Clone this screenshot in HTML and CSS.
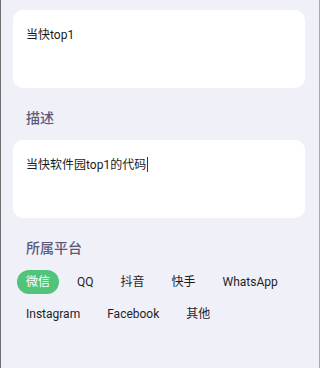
FILE: index.html
```html
<!DOCTYPE html>
<html>
<head>
  <meta charset="UTF-8">
  <title>编辑</title>
  <link rel="stylesheet" href="styles.css">
</head>
<body>
  <div class="page">
    <div class="card">
      <div class="card-text">当快top1</div>
    </div>

    <div class="label">描述</div>
    <div class="card">
      <div class="card-text">当快软件园top1的代码<span class="caret"></span></div>
    </div>

    <div class="label">所属平台</div>
    <div class="chips">
      <span class="chip active">微信</span>
      <span class="chip">QQ</span>
      <span class="chip">抖音</span>
      <span class="chip">快手</span>
      <span class="chip">WhatsApp</span>
      <span class="chip">Instagram</span>
      <span class="chip">Facebook</span>
      <span class="chip">其他</span>
    </div>
  </div>
</body>
</html>
```

FILE: styles.css
```css
html, body {
  margin: 0;
  padding: 0;
}
body {
  width: 320px;
  height: 368px;
  background: #f0f0f9;
  font-family: Roboto, "Noto Sans CJK SC", sans-serif;
  overflow: hidden;
}
.page {
  box-sizing: border-box;
  height: 368px;
  padding: 10px 14px 0 12px;
  border-left: 1px solid #6f6f6f;
  border-right: 1px solid #a8a8b0;
}
.card {
  height: 78px;
  box-sizing: border-box;
  padding: 16px 13px 0 13px;
  background: #ffffff;
  border-radius: 10px;
}
.card-text {
  font-size: 12px;
  line-height: 18px;
  color: #1a1a1a;
}
.caret {
  display: inline-block;
  width: 1px;
  height: 15px;
  margin-left: 1px;
  background: #333;
  vertical-align: -3px;
}
.label {
  margin: 20px 0 12px 13px;
  font-size: 14px;
  line-height: 20px;
  font-weight: 500;
  color: #5c5a78;
}
.chips {
  display: flex;
  flex-wrap: wrap;
  row-gap: 8px;
  column-gap: 9px;
  padding-left: 4px;
}
.chip {
  height: 24px;
  line-height: 24px;
  padding: 0 9px;
  border-radius: 12px;
  font-size: 12px;
  color: #1f1f1f;
}
.chip.active {
  background: #52c37b;
  color: #ffffff;
}
```
